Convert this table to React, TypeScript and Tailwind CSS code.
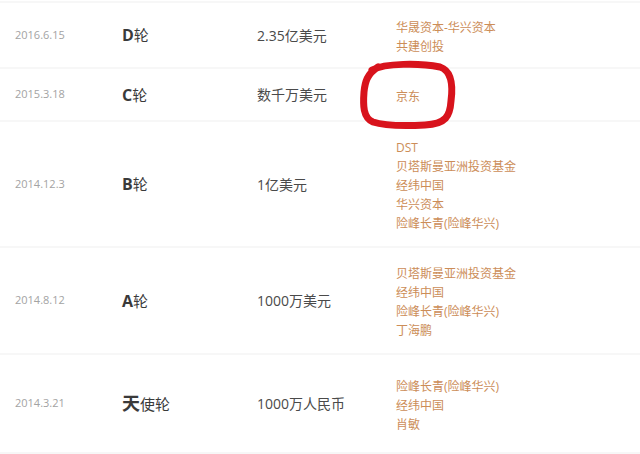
import React from "react";

interface Round {
  date: string;
  lead: string;
  rest: string;
  big?: boolean;
  amount: string;
  investors: string[];
  height: string;
}

const rounds: Round[] = [
  {
    date: "2016.6.15",
    lead: "D",
    rest: "轮",
    amount: "2.35亿美元",
    investors: ["华晟资本-华兴资本", "共建创投"],
    height: "h-[66px]",
  },
  {
    date: "2015.3.18",
    lead: "C",
    rest: "轮",
    amount: "数千万美元",
    investors: ["京东"],
    height: "h-[53px]",
  },
  {
    date: "2014.12.3",
    lead: "B",
    rest: "轮",
    amount: "1亿美元",
    investors: ["DST", "贝塔斯曼亚洲投资基金", "经纬中国", "华兴资本", "险峰长青(险峰华兴)"],
    height: "h-[126px]",
  },
  {
    date: "2014.8.12",
    lead: "A",
    rest: "轮",
    amount: "1000万美元",
    investors: ["贝塔斯曼亚洲投资基金", "经纬中国", "险峰长青(险峰华兴)", "丁海鹏"],
    height: "h-[107px]",
  },
  {
    date: "2014.3.21",
    lead: "天",
    rest: "使轮",
    big: true,
    amount: "1000万人民币",
    investors: ["险峰长青(险峰华兴)", "经纬中国", "肖敏"],
    height: "h-[99px]",
  },
];

function RoundRow({ r }: { r: Round }) {
  return (
    <div className={`flex items-center border-b-2 border-[#f7f7f7] ${r.height}`}>
      <div className="w-[122px] pl-[15px] text-[11px] text-[#a3a3a3]">{r.date}</div>
      <div className="w-[135px] flex items-baseline text-[#3a3a3a]">
        <span className={r.big ? "text-[18px] font-bold" : "text-[16px] font-bold"}>{r.lead}</span>
        <span className="text-[15px]">{r.rest}</span>
      </div>
      <div className="w-[139px] text-[14px] text-[#4a4a4a]">{r.amount}</div>
      <div className="flex flex-col pt-[3px] text-[12px] leading-[19px] text-[#cc8d58]">
        {r.investors.map((name) => (
          <span key={name}>{name}</span>
        ))}
      </div>
    </div>
  );
}

export default function App() {
  return (
    <div
      className="relative w-[640px] h-[454px] overflow-hidden bg-white"
      style={{ fontFamily: '"Open Sans", "Noto Sans CJK SC", sans-serif' }}
    >
      <div className="h-[3px] border-b-2 border-[#f7f7f7]" />
      {rounds.map((r) => (
        <RoundRow key={r.date} r={r} />
      ))}

      {/* hand-drawn red circle around 京东 */}
      <svg
        className="absolute left-[355px] top-[58px]"
        width="105"
        height="75"
        viewBox="0 0 105 75"
        fill="none"
      >
        <path
          d="M17 12 C30 5, 65 5, 85 9 C97 13, 98 28, 96 43 C95 58, 91 66, 70 67 C50 68, 30 68, 18 64 C8 60, 8 47, 9 34 C10 24, 12 16, 23 9"
          stroke="#d8131c"
          strokeWidth="7"
          strokeLinecap="round"
          strokeLinejoin="round"
        />
      </svg>
    </div>
  );
}
